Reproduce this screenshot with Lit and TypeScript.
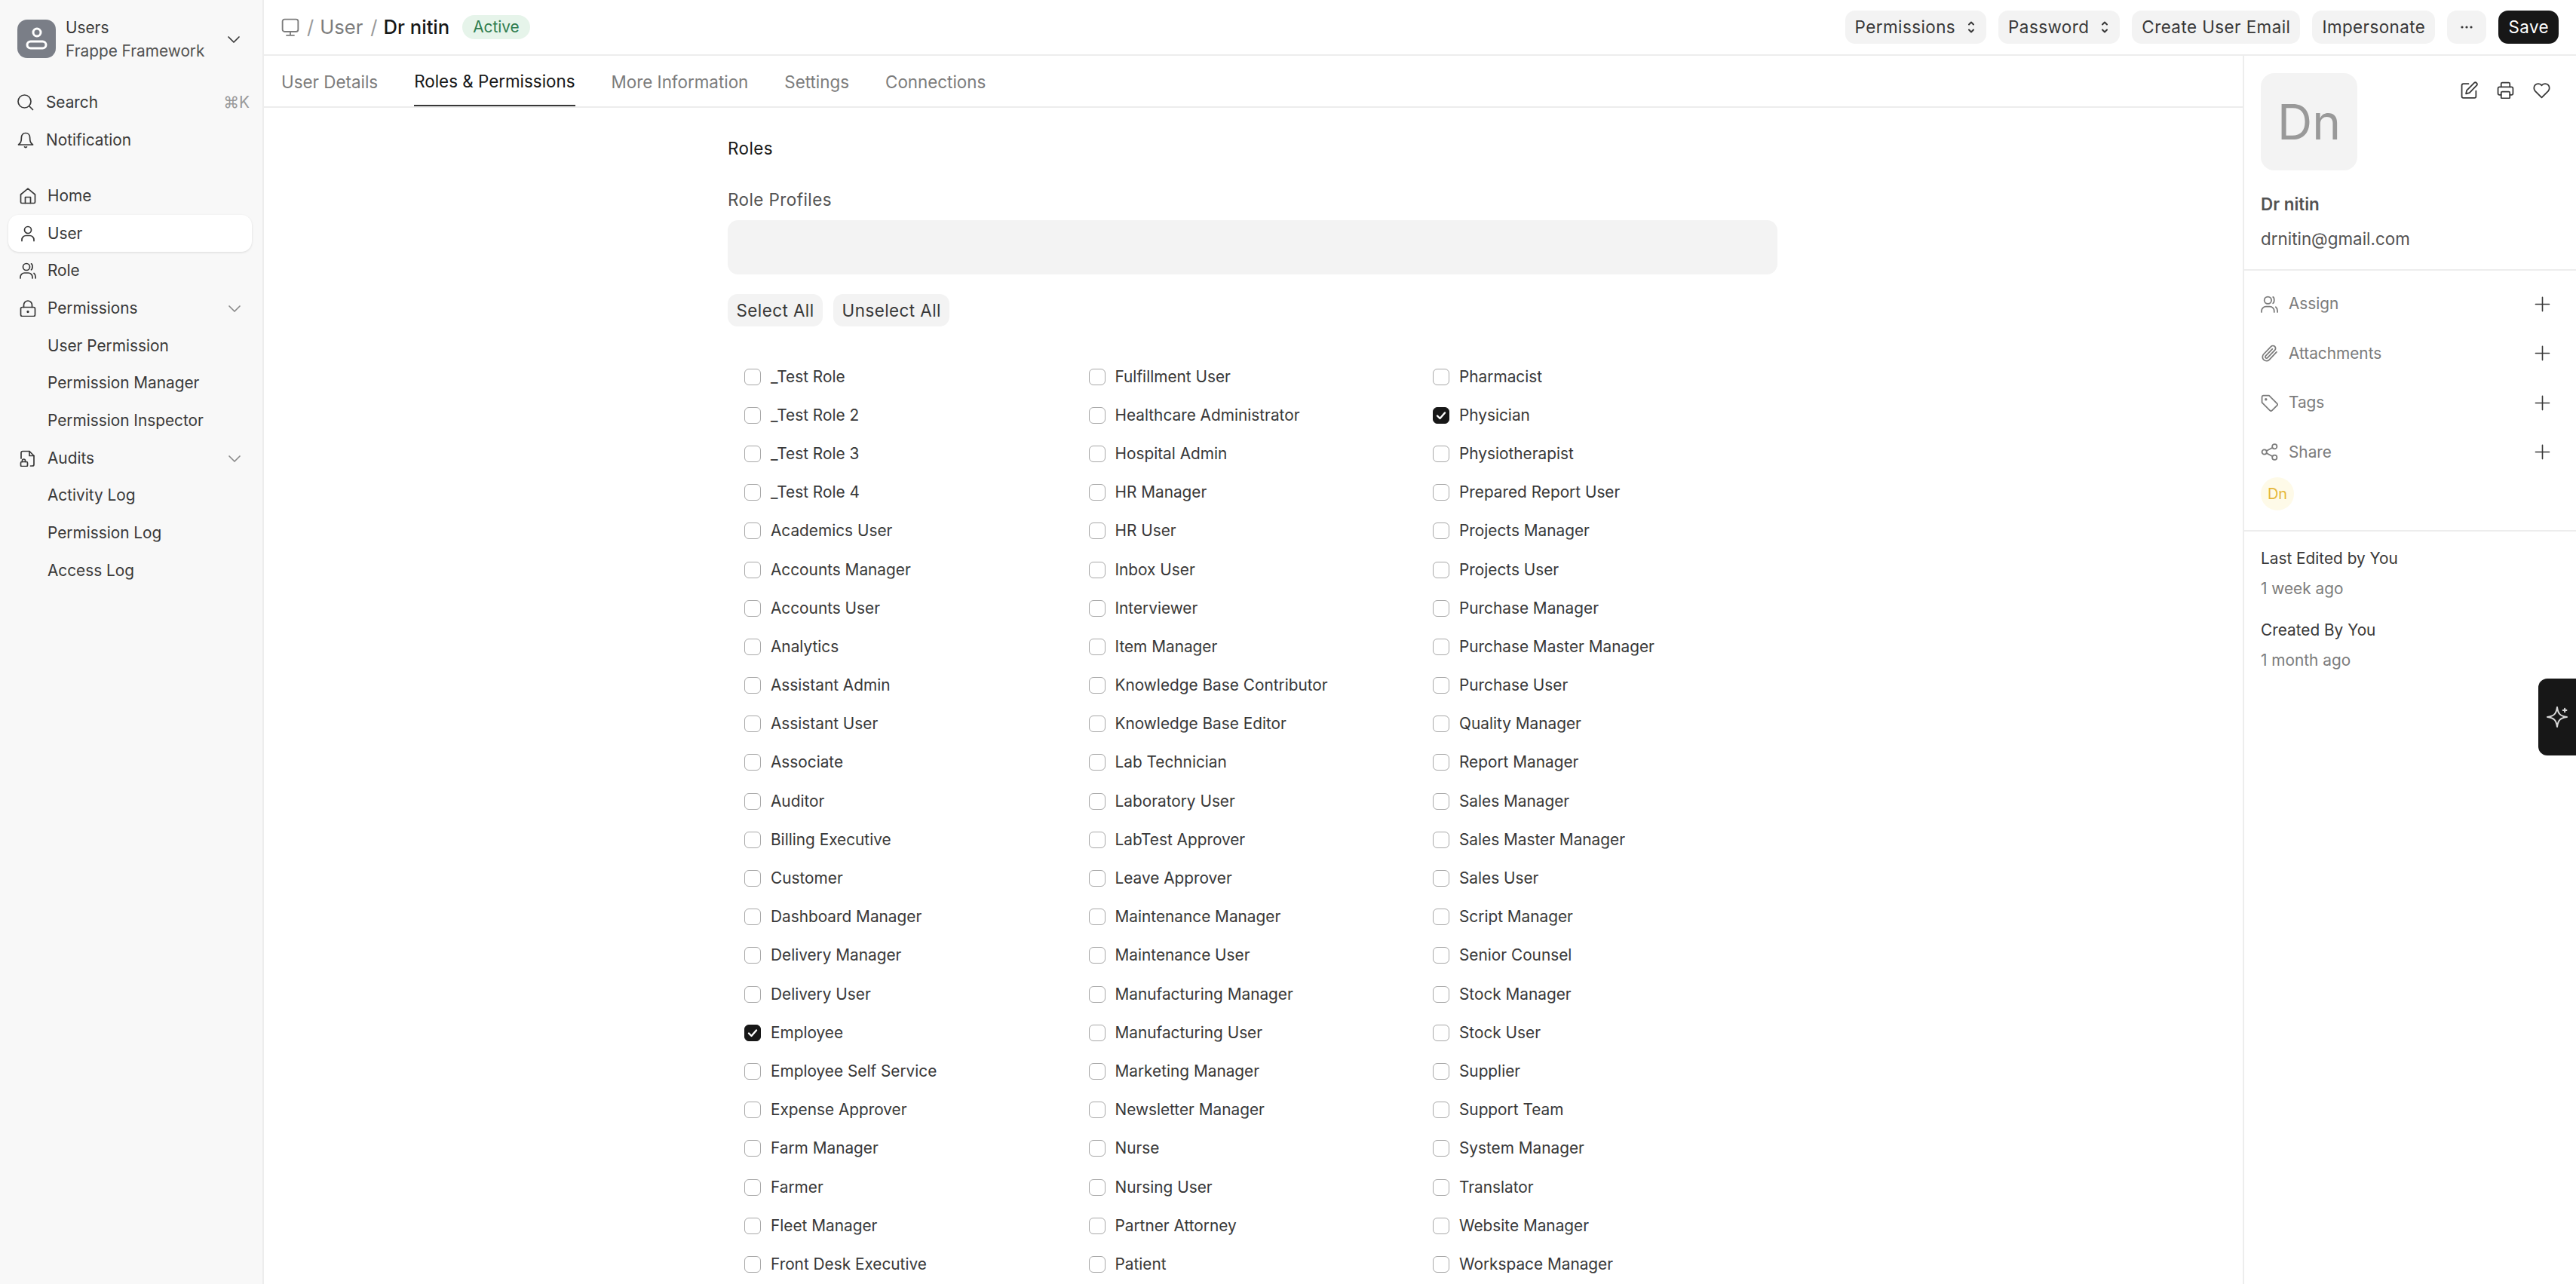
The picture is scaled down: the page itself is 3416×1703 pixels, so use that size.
import { LitElement, html, css, svg } from "lit";
import { customElement } from "lit/decorators.js";

const ICONS: Record<string, unknown> = {
  search: svg`<circle cx="9.5" cy="9.5" r="8.5"/><path d="M16 16l4.5 4.5"/>`,
  bell: svg`<path d="M11 1.500c-3.600 0-5.600 2.700-5.600 6 0 5.400-1 7-3.900 9.500h19c-2.900-2.500-3.900-4.100-3.900-9.500 0-3.300-2-6-5.600-6z"/><path d="M9.500 19.800c.8 1 2.200 1 3 0"/>`,
  home: svg`<path d="M1.500 9L11 1.200 20.500 9v10a1.500 1.500 0 0 1-1.500 1.500H3A1.500 1.500 0 0 1 1.500 19z"/><path d="M7.500 20.500v-8h7v8"/>`,
  user: svg`<circle cx="11" cy="6" r="4.500"/><path d="M3 20.500v-1.500a5.500 5.500 0 0 1 5.500-5.500h5a5.500 5.500 0 0 1 5.500 5.500v1.500"/>`,
  users: svg`<circle cx="9" cy="6" r="4.500"/><path d="M1 21v-1.500a5.500 5.500 0 0 1 5.500-5.500h5a5.500 5.500 0 0 1 5.500 5.500V21"/><path d="M15.500 1.800c2 1 2 7 0 8"/><path d="M19 14.500c1.400 1 2.200 3.200 2.200 6.500"/>`,
  lock: svg`<rect x="1.500" y="9.500" width="19" height="12" rx="2"/><path d="M5.500 9.500V6.500a5.500 5.500 0 0 1 11 0v3"/><circle cx="11" cy="15.500" r=".8" fill="currentColor"/>`,
  fileLock: svg`<path d="M2 11V3.500A2 2 0 0 1 4 1.500h9l6 6V19a2 2 0 0 1-2 2h-2.500"/><path d="M13 1.500v6h6"/><rect x="1.500" y="15.500" width="9" height="6" rx="1.500"/><path d="M3.500 15.500v-1.500a2 2 0 0 1 4 0v1.500"/>`,
  chevron: svg`<path d="M4 8l7 7 7-7"/>`,
  monitor: svg`<rect x="1.500" y="1.500" width="19" height="15" rx="2.500"/><path d="M11 16.500v4.500M6.500 21h9"/>`,
  edit: svg`<path d="M10 3H3.500A2 2 0 0 0 1.500 5v14a2 2 0 0 0 2 2h14a2 2 0 0 0 2-2v-7"/><path d="M17.500 1.500a2.400 2.400 0 0 1 3.200 3.200l-9.500 9.800-4.400 1.100 1-4.300z"/>`,
  printer: svg`<path d="M5.500 7V3a1.500 1.500 0 0 1 1.500-1.500h8A1.500 1.500 0 0 1 16.500 3v4"/><path d="M5.500 17H3.500a2 2 0 0 1-2-2V9a2 2 0 0 1 2-2h15a2 2 0 0 1 2 2v6a2 2 0 0 1-2 2h-2"/><rect x="5.500" y="13" width="11" height="8.500" rx="1.500"/>`,
  heart: svg`<path d="M11 20.500L2.800 12.200a5.500 5.500 0 0 1 0-7.700 5.400 5.400 0 0 1 7.700 0l.5.6.5-.6a5.400 5.400 0 0 1 7.700 0 5.500 5.500 0 0 1 0 7.700z"/>`,
  clip: svg`<path d="M20 9.500l-9.200 9.700a5 5 0 0 1-7.200-7L13 2.500a3.300 3.300 0 0 1 4.800 4.600l-9.300 9.700a1.600 1.600 0 0 1-2.400-2.300l8.600-8.900"/>`,
  tag: svg`<path d="M1.500 3.500a2 2 0 0 1 2-2h7l10 10a2 2 0 0 1 0 2.800l-6.200 6.200a2 2 0 0 1-2.800 0l-10-10z"/><circle cx="6.500" cy="6.500" r=".8" fill="currentColor"/>`,
  share: svg`<circle cx="17.500" cy="4" r="3"/><circle cx="4.500" cy="11" r="3"/><circle cx="17.500" cy="18" r="3"/><path d="M7.200 9.500l7.600-4M7.200 12.500l7.600 4"/>`,
  plus: svg`<path d="M11 1.500v19M1.500 11h19"/>`,
  star: svg`<path d="M11 1.500c.9 6.500 3 8.600 9.500 9.500-6.500.9-8.600 3-9.500 9.500-.9-6.500-3-8.600-9.500-9.500 6.500-.9 8.600-3 9.500-9.500z"/><path d="M18.400 2.700v3.400M16.700 4.400h3.400"/>`,
};

const icon = (name: string, size = 22, stroke = 1.7) => html`<svg
  width=${size}
  height=${size}
  viewBox="0 0 22 22"
  fill="none"
  stroke="currentColor"
  stroke-width=${stroke}
  stroke-linecap="round"
  stroke-linejoin="round"
>${ICONS[name]}</svg>`;

const ROLES = [
  "_Test Role", "_Test Role 2", "_Test Role 3", "_Test Role 4", "Academics User", "Accounts Manager",
  "Accounts User", "Analytics", "Assistant Admin", "Assistant User", "Associate", "Auditor",
  "Billing Executive", "Customer", "Dashboard Manager", "Delivery Manager", "Delivery User", "Employee",
  "Employee Self Service", "Expense Approver", "Farm Manager", "Farmer", "Fleet Manager", "Front Desk Executive",
  "Fulfillment User", "Healthcare Administrator", "Hospital Admin", "HR Manager", "HR User", "Inbox User",
  "Interviewer", "Item Manager", "Knowledge Base Contributor", "Knowledge Base Editor", "Lab Technician", "Laboratory User",
  "LabTest Approver", "Leave Approver", "Maintenance Manager", "Maintenance User", "Manufacturing Manager", "Manufacturing User",
  "Marketing Manager", "Newsletter Manager", "Nurse", "Nursing User", "Partner Attorney", "Patient",
  "Pharmacist", "Physician", "Physiotherapist", "Prepared Report User", "Projects Manager", "Projects User",
  "Purchase Manager", "Purchase Master Manager", "Purchase User", "Quality Manager", "Report Manager", "Sales Manager",
  "Sales Master Manager", "Sales User", "Script Manager", "Senior Counsel", "Stock Manager", "Stock User",
  "Supplier", "Support Team", "System Manager", "Translator", "Website Manager", "Workspace Manager",
];
const CHECKED = ["Employee", "Physician"];

const NAV = [
  { label: "Home", icon: "home" },
  { label: "User", icon: "user", active: true },
  { label: "Role", icon: "users" },
  { label: "Permissions", icon: "lock", group: true },
  { label: "User Permission" },
  { label: "Permission Manager" },
  { label: "Permission Inspector" },
  { label: "Audits", icon: "fileLock", group: true },
  { label: "Activity Log" },
  { label: "Permission Log" },
  { label: "Access Log" },
];

const TABS = ["User Details", "Roles & Permissions", "More Information", "Settings", "Connections"];
const ACTIONS = [
  { label: "Permissions", caret: true },
  { label: "Password", caret: true },
  { label: "Create User Email" },
  { label: "Impersonate" },
];

@customElement("app-root")
export class AppRoot extends LitElement {
  static styles = css`
    :host {
      display: flex;
      height: 100vh;
      overflow: hidden;
      background: #fff;
      color: #383838;
      font-family: Inter, "Noto Sans", sans-serif;
      font-size: 20.8px;
      line-height: 28px;
    }
    svg {
      display: block;
      flex: none;
    }

    .sidebar {
      width: 348px;
      flex: none;
      padding-top: 26px;
      background: #f8f8f8;
      border-right: 2px solid #ededed;
    }
    .switcher {
      display: flex;
      align-items: center;
      height: 51px;
      padding: 0 27px 0 23px;
    }
    .logo {
      width: 51px;
      height: 51px;
      border-radius: 13px;
      background: #7a7e87;
      color: #fff;
      flex: none;
    }
    .switcher-text {
      flex: 1;
      margin-left: 13px;
    }
    .switcher-title,
    .switcher-sub {
      display: block;
      line-height: 31px;
    }
    .switcher-sub {
      color: #525252;
    }
    .tools {
      margin-top: 34px;
    }
    .tool {
      display: flex;
      align-items: center;
      height: 50px;
      padding: 0 17px 0 23px;
    }
    .tool span {
      margin-left: 16px;
      flex: 1;
    }
    .tool kbd {
      font: inherit;
      color: #999;
    }
    .nav {
      margin-top: 24px;
      padding: 0 14px 0 11px;
    }
    .nav-item {
      display: flex;
      align-items: center;
      height: 49.7px;
      padding: 0 0 0 14px;
      border-radius: 14px;
      box-sizing: border-box;
    }
    .nav-item.active {
      background: #fff;
      box-shadow: 0 1px 3px rgba(0, 0, 0, 0.12);
    }
    .nav-icon {
      width: 24px;
      margin-right: 14px;
      display: flex;
      justify-content: center;
      flex: none;
    }
    .nav-label {
      flex: 1;
    }
    .nav-chevron {
      margin-right: 12px;
      color: #8a8a8a;
    }

    .main {
      flex: 1;
      min-width: 0;
      display: flex;
      flex-direction: column;
      position: relative;
    }
    .topbar {
      height: 72px;
      flex: none;
      display: flex;
      align-items: center;
      padding: 0 23px;
      border-bottom: 2px solid #ededed;
    }
    .crumbs {
      flex: 1;
      display: flex;
      align-items: center;
      color: #7c7c7c;
      font-size: 25.6px;
    }
    .sep {
      margin: 0 8px 0 10px;
      color: #999;
    }
    .crumb-now {
      color: #171717;
      font-weight: 500;
    }
    .badge {
      margin-left: 17px;
      height: 32px;
      padding: 0 14px;
      display: flex;
      align-items: center;
      border-radius: 16px;
      background: #e6f4ea;
      color: #2f7d4f;
      font-size: 20.8px;
    }
    .actions {
      display: flex;
      gap: 16px;
    }
    .btn {
      height: 44px;
      padding: 0 13px;
      display: flex;
      align-items: center;
      gap: 16px;
      border-radius: 13px;
      background: #f3f3f3;
      color: #383838;
      font-size: 22.4px;
      letter-spacing: 0.02em;
    }
    .btn.caret-btn {
      padding-right: 15px;
    }
    .btn.primary {
      background: #171717;
      color: #fff;
    }
    .caret {
      width: 10px;
      height: 20px;
    }

    .body {
      flex: 1;
      display: flex;
      min-height: 0;
    }
    .content {
      flex: 1;
      min-width: 0;
    }
    .tabs {
      height: 67px;
      display: flex;
      gap: 48px;
      padding: 0 23px;
      border-bottom: 2px solid #ededed;
      color: #7c7c7c;
      font-size: 22.4px;
    }
    .tab {
      display: flex;
      align-items: center;
      height: 67px;
      box-sizing: border-box;
      padding-top: 2px;
    }
    .tab.active {
      color: #171717;
      border-bottom: 2px solid #383838;
    }
    .form {
      width: 1392px;
      margin-left: 615px;
      padding-top: 40px;
    }
    .section-title {
      color: #171717;
      font-size: 22.4px;
      letter-spacing: 0.02em;
    }
    .field-label {
      margin-top: 40px;
      color: #525252;
      font-size: 22.4px;
      letter-spacing: 0.02em;
    }
    .input {
      margin-top: 13px;
      height: 72px;
      border-radius: 14px;
      background: #f3f3f3;
    }
    .form-actions {
      margin-top: 26px;
      display: flex;
      gap: 14px;
    }
    .form-actions .btn {
      height: 43px;
      padding: 0 11.5px;
    }
    .checks {
      margin-top: 41px;
      padding-left: 22px;
      display: grid;
      grid-auto-flow: column;
      grid-template-rows: repeat(24, 51.2px);
      grid-template-columns: repeat(3, 456.5px);
    }
    .check {
      display: flex;
      align-items: center;
      gap: 13px;
    }
    .box {
      width: 22px;
      height: 22px;
      box-sizing: border-box;
      border: 1.5px solid #a8a8a8;
      border-radius: 6px;
      background: #fff;
      flex: none;
    }
    .box.on {
      border-color: #171717;
      background: #171717;
      color: #fff;
      display: flex;
      align-items: center;
      justify-content: center;
    }

    .aside {
      width: 440px;
      flex: none;
      border-left: 2px solid #ededed;
    }
    .aside-top {
      padding: 23px 34px 26px 22px;
      border-bottom: 2px solid #ededed;
    }
    .aside-head {
      display: flex;
      justify-content: space-between;
    }
    .avatar {
      width: 128px;
      height: 129px;
      border-radius: 18px;
      background: #f3f3f3;
      color: #999;
      font-size: 64px;
      display: flex;
      align-items: center;
      justify-content: center;
    }
    .aside-icons {
      display: flex;
      gap: 25px;
      margin-top: 11px;
      color: #383838;
    }
    .name {
      margin-top: 31px;
      color: #525252;
      font-size: 22.4px;
      font-weight: 600;
    }
    .email {
      margin-top: 18px;
      color: #525252;
      font-size: 22.4px;
    }
    .aside-mid {
      padding: 30px 34px 26px 22px;
      border-bottom: 2px solid #ededed;
    }
    .side-row {
      display: flex;
      align-items: center;
      color: #7c7c7c;
      margin-bottom: 37.6px;
    }
    .side-row:nth-child(4) {
      margin-bottom: 19px;
    }
    .side-row span {
      flex: 1;
      margin-left: 14px;
    }
    .side-row .add {
      color: #383838;
    }
    .chip {
      width: 44px;
      height: 44px;
      border-radius: 50%;
      background: #fefae8;
      color: #e5b73b;
      font-size: 20px;
      display: flex;
      align-items: center;
      justify-content: center;
    }
    .aside-meta {
      padding: 22px;
      display: grid;
      gap: 12px;
    }
    .aside-meta .when {
      color: #7c7c7c;
      margin-bottom: 15px;
    }
    .ai {
      position: absolute;
      top: 900px;
      right: 0;
      width: 50px;
      height: 102px;
      border-radius: 12px 0 0 12px;
      background: #171717;
      color: #d8d8d8;
      display: flex;
      align-items: center;
      justify-content: center;
    }
  `;

  renderSidebar() {
    return html`
      <aside class="sidebar">
        <div class="switcher">
          <div class="logo">
            <svg width="51" height="51" viewBox="0 0 51 51" fill="none" stroke="currentColor" stroke-width="3">
              <circle cx="26" cy="17" r="5" />
              <rect x="13" y="29" width="25" height="9" rx="4.500" />
            </svg>
          </div>
          <div class="switcher-text">
            <span class="switcher-title">Users</span>
            <span class="switcher-sub">Frappe Framework</span>
          </div>
          ${icon("chevron")}
        </div>
        <div class="tools">
          <div class="tool">${icon("search")}<span>Search</span><kbd>⌘K</kbd></div>
          <div class="tool">${icon("bell")}<span>Notification</span></div>
        </div>
        <nav class="nav">
          ${NAV.map(
            (item) => html`
              <div class="nav-item ${item.active ? "active" : ""}">
                <div class="nav-icon">${item.icon ? icon(item.icon) : ""}</div>
                <div class="nav-label">${item.label}</div>
                ${item.group ? html`<div class="nav-chevron">${icon("chevron")}</div>` : ""}
              </div>
            `
          )}
        </nav>
      </aside>
    `;
  }

  renderTopbar() {
    return html`
      <header class="topbar">
        <div class="crumbs">
          ${icon("monitor", 24)}
          <span class="sep">/</span>
          <span>User</span>
          <span class="sep">/</span>
          <span class="crumb-now">Dr nitin</span>
          <span class="badge">Active</span>
        </div>
        <div class="actions">
          ${ACTIONS.map(
            (a) => html`
              <div class="btn ${a.caret ? "caret-btn" : ""}">
                ${a.label}
                ${a.caret
                  ? html`<svg class="caret" viewBox="0 0 10 20" fill="none" stroke="currentColor" stroke-width="2" stroke-linecap="round" stroke-linejoin="round">
                      <path d="M2 6.500l3-3 3 3M2 13.500l3 3 3-3" />
                    </svg>`
                  : ""}
              </div>
            `
          )}
          <div class="btn">
            <svg width="26" height="20" viewBox="0 0 26 20" fill="currentColor">
              <circle cx="7" cy="10" r="1.600" /><circle cx="13" cy="10" r="1.600" /><circle cx="19" cy="10" r="1.600" />
            </svg>
          </div>
          <div class="btn primary">Save</div>
        </div>
      </header>
    `;
  }

  renderForm() {
    return html`
      <section class="content">
        <div class="tabs">
          ${TABS.map((t, i) => html`<div class="tab ${i === 1 ? "active" : ""}">${t}</div>`)}
        </div>
        <div class="form">
          <div class="section-title">Roles</div>
          <div class="field-label">Role Profiles</div>
          <div class="input"></div>
          <div class="form-actions">
            <div class="btn">Select All</div>
            <div class="btn">Unselect All</div>
          </div>
          <div class="checks">
            ${ROLES.map(
              (r) => html`
                <div class="check">
                  ${CHECKED.includes(r)
                    ? html`<div class="box on">
                        <svg width="14" height="14" viewBox="0 0 14 14" fill="none" stroke="currentColor" stroke-width="2.400" stroke-linecap="round" stroke-linejoin="round">
                          <path d="M2 7.500l3.500 3.500L12 3.500" />
                        </svg>
                      </div>`
                    : html`<div class="box"></div>`}
                  <span>${r}</span>
                </div>
              `
            )}
          </div>
        </div>
      </section>
    `;
  }

  renderAside() {
    const rows = [
      { label: "Assign", icon: "users" },
      { label: "Attachments", icon: "clip" },
      { label: "Tags", icon: "tag" },
      { label: "Share", icon: "share" },
    ];
    return html`
      <aside class="aside">
        <div class="aside-top">
          <div class="aside-head">
            <div class="avatar">Dn</div>
            <div class="aside-icons">${icon("edit", 23)}${icon("printer", 23)}${icon("heart", 23)}</div>
          </div>
          <div class="name">Dr nitin</div>
          <div class="email">drnitin@gmail.com</div>
        </div>
        <div class="aside-mid">
          ${rows.map(
            (r) => html`
              <div class="side-row">
                ${icon(r.icon, 23)}<span>${r.label}</span>
                <div class="add">${icon("plus", 21)}</div>
              </div>
            `
          )}
          <div class="chip">Dn</div>
        </div>
        <div class="aside-meta">
          <div>Last Edited by You</div>
          <div class="when">1 week ago</div>
          <div>Created By You</div>
          <div class="when">1 month ago</div>
        </div>
      </aside>
    `;
  }

  render() {
    return html`
      ${this.renderSidebar()}
      <div class="main">
        ${this.renderTopbar()}
        <div class="body">${this.renderForm()}${this.renderAside()}</div>
        <div class="ai">${icon("star", 30, 1.5)}</div>
      </div>
    `;
  }
}
